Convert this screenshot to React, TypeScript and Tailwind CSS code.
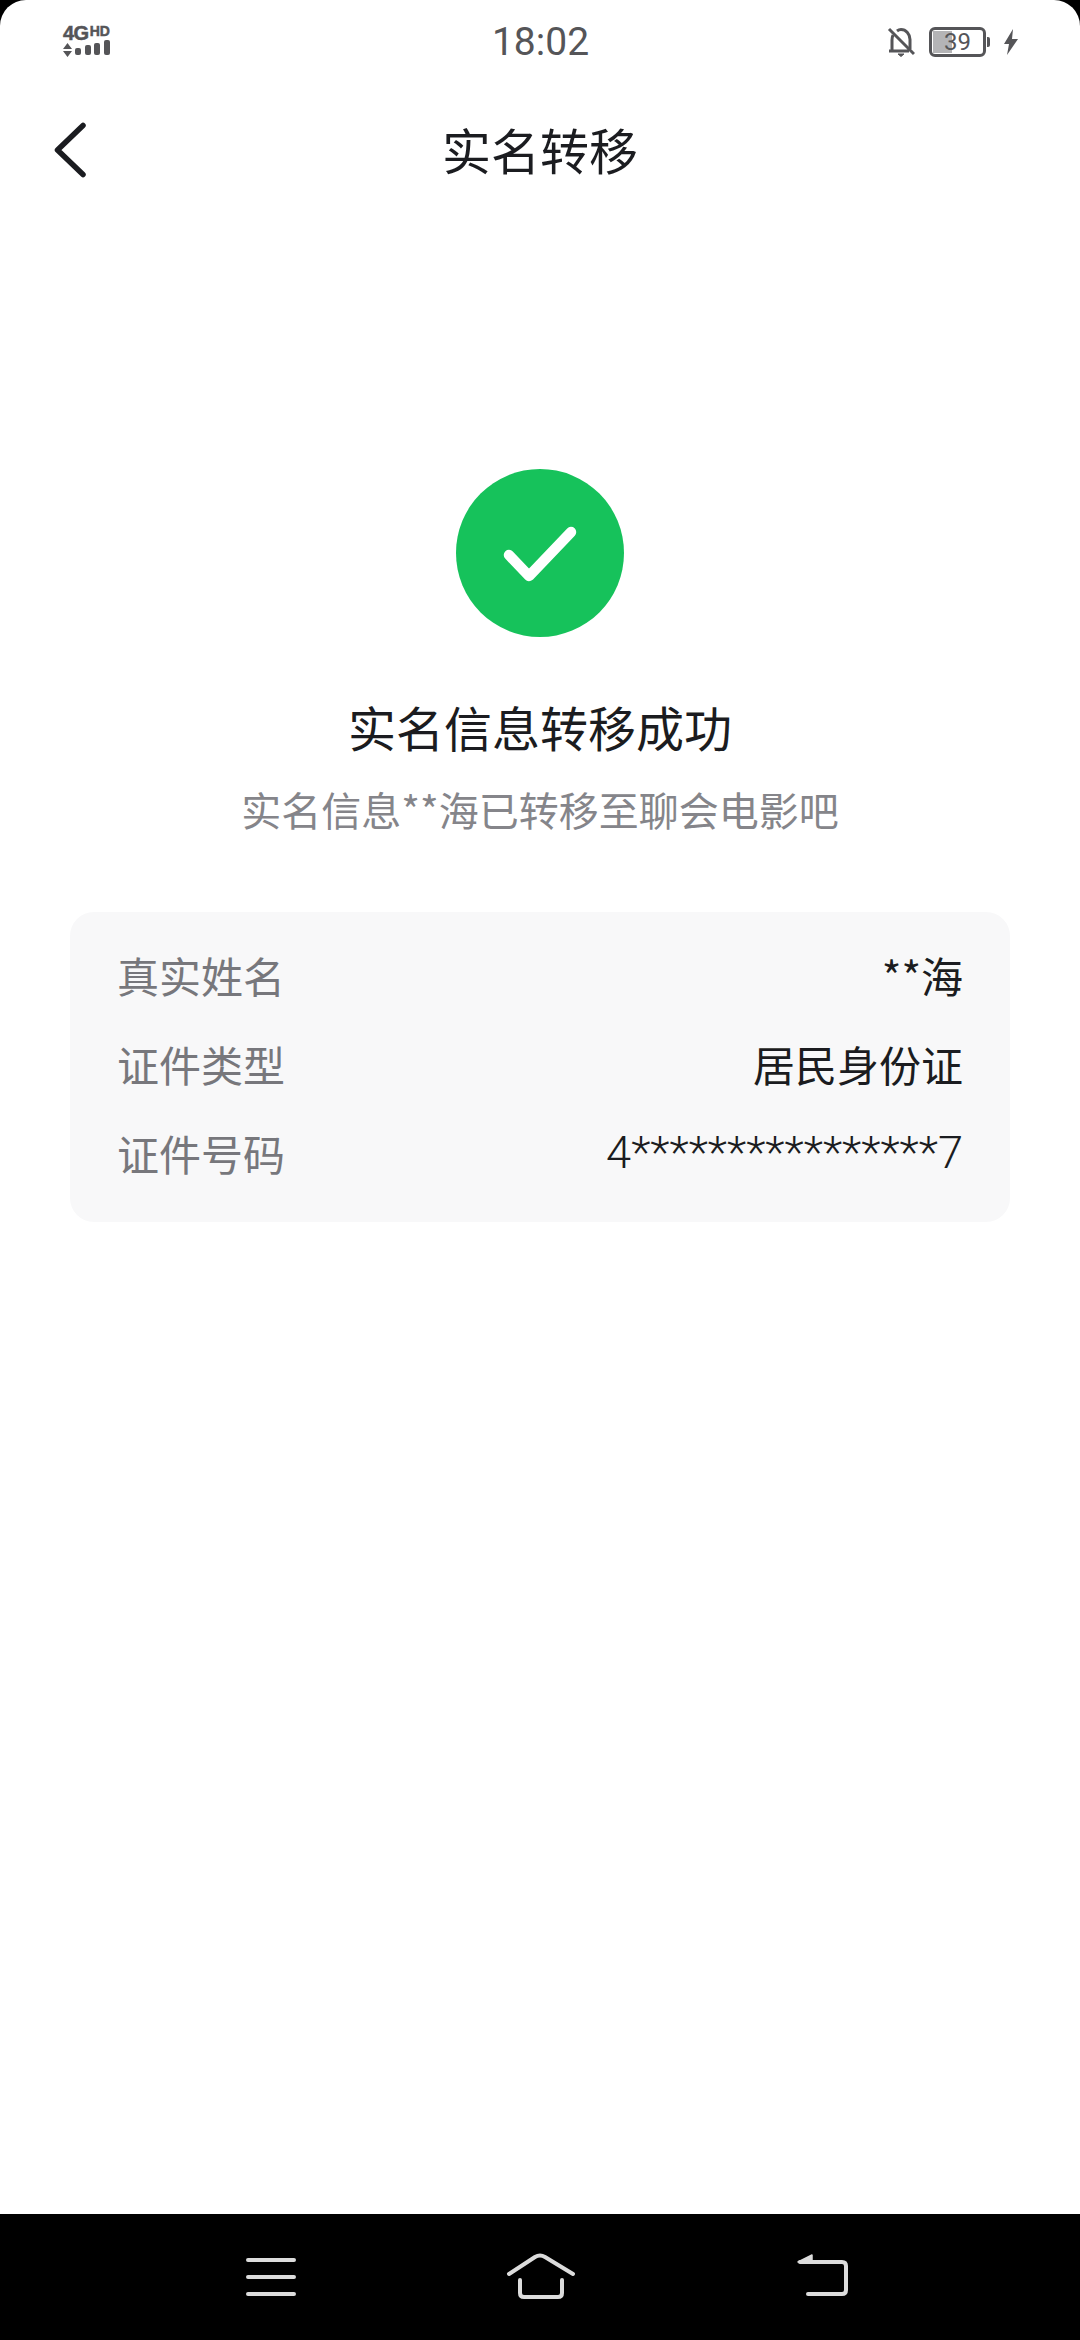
const font = { fontFamily: '"Noto Sans CJK SC", "Noto Sans", sans-serif' };

const rows = [
  { label: "真实姓名", value: "**海", latin: false },
  { label: "证件类型", value: "居民身份证", latin: false },
  { label: "证件号码", value: "4****************7", latin: true },
];

const StatusBar = () => (
  <div className="flex h-[84px] shrink-0 items-center justify-between pl-[63px] pr-[62px]">
    <div className="flex w-[160px] flex-col">
      <div className="flex h-[14px] items-start font-['Liberation_Sans'] font-bold leading-none text-[#555558] [-webkit-text-stroke:0.5px_#555558]">
        <span className="text-[20px] leading-[14px] tracking-[-0.5px]">4G</span>
        <span className="ml-[1px] text-[14px] leading-[10px]">HD</span>
      </div>
      <svg width="48" height="18" viewBox="0 0 48 18" fill="#555558">
        <path d="M0 9 4.500 3 9 9ZM0 11h9l-4.500 6Z" />
        <rect x="12" y="8" width="6" height="7" rx="2" />
        <rect x="22" y="5" width="6" height="10" rx="2" />
        <rect x="31" y="3" width="6" height="12" rx="2" />
        <rect x="41" y="0" width="6" height="15" rx="2" />
      </svg>
    </div>
    <span className="font-['Roboto'] text-[39px] leading-none text-[#555558]">18:02</span>
    <div className="flex w-[160px] items-center justify-end">
      <svg width="28" height="30" viewBox="0 0 28 30" fill="none" stroke="#555558" strokeWidth="3" className="mr-[14px]">
        <path d="M5 24V13c0-2 .4-3.500 1-5M10 4c1-.8 2.500-1.500 4-1.500 5 0 9 4.500 9 10V22" />
        <path d="M2 24h20M2 2l25 25" />
        <path d="M11 27h6l-3 2.500Z" fill="#555558" strokeWidth="1" />
      </svg>
      <div className="relative flex h-[30px] w-[57px] items-center justify-center rounded-[6px] border-[3px] border-[#555558]">
        <div className="absolute left-[1px] top-[1px] bottom-[1px] w-[19px] bg-[#b4b4b6]" />
        <span className="relative font-['Roboto'] text-[24px] leading-none text-[#555558]">39</span>
      </div>
      <div className="ml-[1px] h-[10px] w-[3px] rounded-r-[2px] bg-[#555558]" />
      <svg width="14" height="26" viewBox="0 0 14 26" fill="#555558" className="ml-[14px]">
        <path d="M9 0 0 15h5l-2 11 11-16H8Z" />
      </svg>
    </div>
  </div>
);

const Header = () => (
  <div className="relative flex h-[132px] shrink-0 items-center justify-center">
    <button className="absolute left-[53px] top-[37px]">
      <svg width="34" height="58" viewBox="0 0 34 58" fill="none" stroke="#1b1c20" strokeWidth="5.500" strokeLinecap="round" strokeLinejoin="round" className="block">
        <path d="M30 4.500 4.500 29 30 53.500" />
      </svg>
    </button>
    <span className="-mt-[4px] text-[49px] leading-none text-[#1b1c20]">实名转移</span>
  </div>
);

const NavBar = () => (
  <div className="flex h-[126px] shrink-0 items-start bg-black">
    <svg width="1080" height="126" viewBox="0 2214 1080 126" fill="none" stroke="#dcdcdc" strokeWidth="4" strokeLinecap="round" strokeLinejoin="round">
      <path d="M248 2260h46M248 2277h46M248 2294h46" />
      <path d="M509 2274 535 2257q5-3 10 0l28 17" />
      <path d="M520 2280v13q0 4 4 4h34q4 0 4-4v-13" />
      <path d="M800 2262h42q4 0 4 4v24q0 4-4 4h-34" />
      <path d="M798 2262 812 2255v7Z" fill="#dcdcdc" strokeWidth="1.500" />
    </svg>
  </div>
);

export default function App() {
  return (
    <div className="flex h-[2340px] w-[1080px] flex-col overflow-hidden bg-black" style={font}>
      <div className="flex flex-1 flex-col rounded-t-[26px] bg-white">
        <StatusBar />
        <Header />
        <main className="flex flex-col items-center pt-[253px]">
          <div className="flex h-[168px] w-[168px] items-center justify-center rounded-full bg-[#16c25b]">
            <svg width="168" height="168" viewBox="0 0 168 168" fill="none" stroke="#fff" strokeWidth="10.500" strokeLinecap="round" strokeLinejoin="round">
              <path d="M53 86 73 107 115 63" />
            </svg>
          </div>
          <p className="mt-[57px] text-[48px] leading-[64px] text-[#1b1c20]">实名信息转移成功</p>
          <p className="mt-[23px] text-[40px] leading-[56px] text-[#85858a]">实名信息**海已转移至聊会电影吧</p>
          <div className="mt-[75px] flex w-[940px] flex-col gap-[33px] rounded-[24px] bg-[#f8f8f9] px-[47px] pb-[41px] pt-[35px]">
            {rows.map((row) => (
              <div key={row.label} className="flex h-[56px] items-center justify-between text-[42px] leading-[56px]">
                <span className="text-[#77777c]">{row.label}</span>
                {row.latin ? (
                  <span className="font-['Roboto'] text-[45.2px] font-light text-[#1b1c20]">{row.value}</span>
                ) : (
                  <span className="text-[#1b1c20]">{row.value}</span>
                )}
              </div>
            ))}
          </div>
        </main>
      </div>
      <NavBar />
    </div>
  );
}
